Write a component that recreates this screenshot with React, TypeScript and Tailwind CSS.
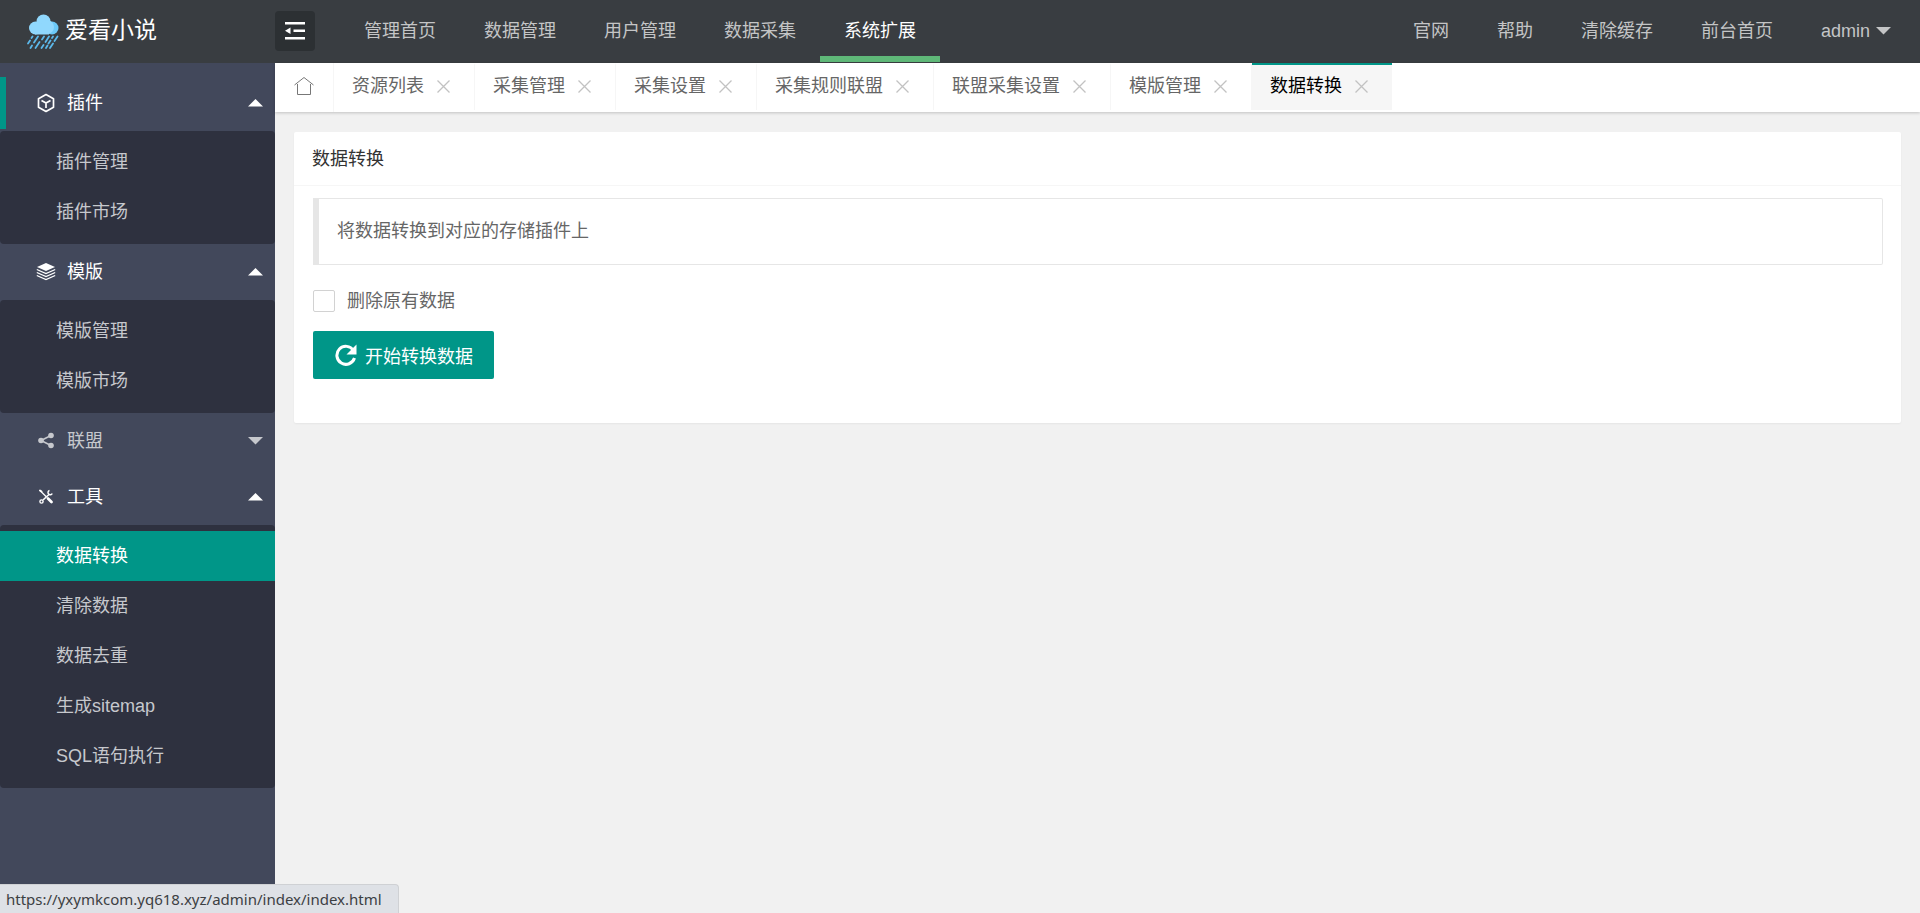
import React, { useState } from "react";

const topLinks = ["管理首页", "数据管理", "用户管理", "数据采集", "系统扩展"];
const rightLinks = ["官网", "帮助", "清除缓存", "前台首页"];
const tabs = ["资源列表", "采集管理", "采集设置", "采集规则联盟", "联盟采集设置", "模版管理", "数据转换"];

const menu = [
  { title: "插件", icon: "cube", items: ["插件管理", "插件市场"] },
  { title: "模版", icon: "layers", items: ["模版管理", "模版市场"] },
  { title: "联盟", icon: "share", items: [] },
  {
    title: "工具",
    icon: "tools",
    items: ["数据转换", "清除数据", "数据去重", "生成sitemap", "SQL语句执行"],
  },
];

function LogoIcon() {
  return (
    <svg width="32" height="36" viewBox="0 0 32 36" aria-hidden="true">
      <circle cx="25" cy="14" r="6.5" fill="#6cc9f7" />
      <circle cx="16.5" cy="7.5" r="7" fill="#90d8fd" />
      <circle cx="8.5" cy="14" r="6.5" fill="#90d8fd" />
      <circle cx="20" cy="13" r="7" fill="#90d8fd" />
      <rect x="8" y="12" width="14" height="8.5" fill="#90d8fd" />
      <g stroke="#5cb9ea" strokeWidth="1.8" strokeLinecap="round">
        <path d="M5.500 22.500l-1 1.500M3 26.500l-2 3M11 22.500l-4 6M5 31.500L3.500 34M17 22.500l-2 3M12.500 28l-4 6M22 22.500l-3.500 5.500M16.500 31l-2 3M26 22.500l-1 1.500M23.500 26.500l-2 3M30.500 22.500l-3 4.500M20.500 31.500L19 34M26 29.500l-3 4.500" />
      </g>
    </svg>
  );
}

function MenuIcon({ name }: { name: string }) {
  if (name === "cube") {
    return (
      <svg width="20" height="20" viewBox="0 0 20 20" fill="none" stroke="currentColor" strokeWidth="1.7" strokeLinejoin="round" aria-hidden="true">
        <path d="M10 1.500l7.500 4.200v8.600L10 18.500l-7.500-4.200V5.700z" />
        <path d="M5.500 7.500l4.500 2.600 4.500-2.600M10 10v5" />
      </svg>
    );
  }
  if (name === "layers") {
    return (
      <svg width="20" height="20" viewBox="0 0 20 20" fill="none" stroke="currentColor" strokeWidth="1.3" aria-hidden="true">
        <path d="M10 1l9 4-9 4-9-4z" fill="currentColor" stroke="none" />
        <path d="M.8 7.500L10 11.500l9.200-4M.8 10.500L10 14.500l9.200-4M.8 13.500L10 17.500l9.200-4" />
      </svg>
    );
  }
  if (name === "share") {
    return (
      <svg width="20" height="20" viewBox="0 0 20 20" fill="currentColor" aria-hidden="true">
        <path d="M15 4.500L5 9.500l10 5" fill="none" stroke="currentColor" strokeWidth="1.6" />
        <circle cx="15" cy="4.5" r="2.8" />
        <circle cx="5" cy="9.5" r="2.8" />
        <circle cx="15" cy="14.5" r="2.8" />
      </svg>
    );
  }
  return (
    <svg width="20" height="20" viewBox="0 0 20 20" fill="none" stroke="currentColor" aria-hidden="true">
      <path d="M4.500 4l5.500 5.500" strokeWidth="1.3" strokeLinecap="round" />
      <path d="M4 3.500l1.500 1" strokeWidth="2" strokeLinecap="round" />
      <path d="M12 11.500l3.500 3.500" strokeWidth="2.8" strokeLinecap="round" />
      <path d="M13 7.500L7 13" strokeWidth="1.6" />
      <circle cx="5.5" cy="14.5" r="1.6" strokeWidth="1.4" />
      <path d="M13.500 3.500a2.200 2.200 0 1 0 2.700 3" strokeWidth="1.5" />
    </svg>
  );
}

function Arrow({ up }: { up?: boolean }) {
  return (
    <svg width="15" height="8" viewBox="0 0 15 8" fill="currentColor" aria-hidden="true">
      {up ? <path d="M0 7.500L7.500 0 15 7.500z" /> : <path d="M0 0h15L7.500 7.500z" />}
    </svg>
  );
}

export default function App() {
  const [open, setOpen] = useState(["插件", "模版", "工具"]);
  const [tab, setTab] = useState("数据转换");

  const toggle = (title: string) => {
    setOpen(open.includes(title) ? open.filter((t) => t !== title) : [...open, title]);
  };

  const headClass = (title: string) => {
    if (title === "插件") {
      return "my-[2px] flex h-[52px] w-full items-center border-l-[6px] border-[#009688] pr-3 pl-[30px] text-white";
    }
    return open.includes(title)
      ? "flex h-14 w-full items-center pr-3 pl-9 text-white"
      : "flex h-14 w-full items-center pr-3 pl-9";
  };

  return (
    <div className="flex min-h-screen flex-col bg-[#f1f1f1] font-['Liberation_Sans','Noto_Sans_CJK_SC',sans-serif] text-lg text-[#666]">
      <header className="flex h-[63px] bg-[#393d41] text-[#c4c5c6]">
        <div className="flex w-[275px] items-center gap-[6px] pl-[27px] text-white">
          <LogoIcon />
          <h1 className="pb-[2px] text-[23px]">爱看小说</h1>
        </div>
        <button aria-label="收起菜单" className="mt-[11px] flex size-10 items-center justify-center rounded bg-[#2c3033] text-white">
          <svg width="20" height="18" viewBox="0 0 20 18" fill="currentColor" aria-hidden="true">
            <path d="M0 0h20v2.500H0zM8.500 7.500H20V10H8.500zM0 15h20v2.500H0zM0 8.700L5.500 5.500v6.500z" />
          </svg>
        </button>
        <nav className="ml-[25px] flex">
          {topLinks.map((link) => (
            <a
              key={link}
              href="#"
              className={
                link === "系统扩展"
                  ? "mb-px flex w-[120px] items-center justify-center border-b-[6px] border-[#5fb878] pt-[6px] text-white"
                  : "mb-px flex w-[120px] items-center justify-center border-b-[6px] border-transparent pt-[6px]"
              }
            >
              {link}
            </a>
          ))}
        </nav>
        <nav className="ml-auto flex items-center gap-12 pr-[29px] pb-[2px]">
          {rightLinks.map((link) => (
            <a key={link} href="#">
              {link}
            </a>
          ))}
          <button className="flex items-center gap-[6px]">
            admin
            <Arrow />
          </button>
        </nav>
      </header>

      <div className="flex flex-1">
        <aside className="w-[275px] shrink-0 bg-[#42485b] pt-3 text-[#c6c8cd]">
          {menu.map((group) => {
            const isOpen = open.includes(group.title);
            return (
              <div key={group.title} className="flow-root">
                <button onClick={() => toggle(group.title)} className={headClass(group.title)}>
                  <MenuIcon name={group.icon} />
                  <span className="ml-[11px] flex-1 text-left">{group.title}</span>
                  <Arrow up={isOpen} />
                </button>
                {isOpen && (
                  <ul className="rounded-sm bg-[#2e313f] pt-[6px] pb-[7px]">
                    {group.items.map((item) => (
                      <li key={item}>
                        <a
                          href="#"
                          className={
                            item === "数据转换"
                              ? "flex h-[50px] items-center bg-[#009688] pl-14 text-white"
                              : "flex h-[50px] items-center pl-14"
                          }
                        >
                          {item}
                        </a>
                      </li>
                    ))}
                  </ul>
                )}
              </div>
            );
          })}
        </aside>

        <main className="min-w-0 flex-1">
          <div className="flex h-[49px] bg-white shadow-[0_1px_3px_rgba(0,0,0,0.2)]">
            <a href="#" aria-label="首页" className="flex w-[59px] items-center justify-center border-r border-[#f6f6f6] pb-[3px] text-[#777]">
              <svg width="20" height="20" viewBox="0 0 20 20" fill="none" stroke="currentColor" aria-hidden="true">
                <path d="M.5 9L10 1.500 19.500 9M3.500 8v10.500h13V8" />
              </svg>
            </a>
            {tabs.map((name) => (
              <div
                key={name}
                className={
                  name === tab
                    ? "mb-[2px] flex items-center gap-[13px] border-t-2 border-[#009688] bg-[#f6f6f6] px-[18px] pb-[3px] text-black"
                    : "mb-[2px] flex items-center gap-[13px] border-t-2 border-r border-t-transparent border-r-[#f6f6f6] px-[18px] pb-[3px]"
                }
              >
                <button onClick={() => setTab(name)}>{name}</button>
                <button aria-label={"关闭" + name} className="pr-[6px] text-[#c2c2c2]">
                  <svg width="13" height="13" viewBox="0 0 13 13" stroke="currentColor" strokeWidth="1.3" aria-hidden="true">
                    <path d="M.5.5l12 12M12.500.5l-12 12" />
                  </svg>
                </button>
              </div>
            ))}
          </div>

          <section className="mx-[19px] mt-5 rounded-xs bg-white shadow-[0_1px_2px_rgba(0,0,0,0.05)]">
            <h2 className="border-b border-[#f6f6f6] px-[18px] pt-[13px] pb-3 text-[#333]">数据转换</h2>
            <form className="pt-3 pr-[18px] pb-11 pl-[19px]" onSubmit={(e) => e.preventDefault()}>
              <blockquote className="rounded-r-xs border border-l-[6px] border-[#e6e6e6] px-[18px] pt-[18px] pb-[19px]">
                将数据转换到对应的存储插件上
              </blockquote>
              <label className="mt-[22px] flex w-fit items-center gap-3">
                <input type="checkbox" className="size-[22px] appearance-none rounded-xs border border-[#d2d2d2] checked:bg-[#5fb878]" />
                删除原有数据
              </label>
              <button className="mt-4 flex h-12 items-center gap-2 rounded-xs bg-[#009688] pr-[21px] pl-[22px] text-white">
                <svg width="22" height="22" viewBox="0 0 22 22" aria-hidden="true">
                  <path d="M18.500 6.500A9 9 0 1 0 19.500 14" fill="none" stroke="currentColor" strokeWidth="3" />
                  <path d="M21.500.5v10h-10z" fill="currentColor" />
                </svg>
                <span className="pt-[3px]">开始转换数据</span>
              </button>
            </form>
          </section>
        </main>
      </div>

      {/* link preview */}
      <div className="fixed bottom-0 left-0 rounded-tr border-t border-r border-[#cfd1d4] bg-[#dee1e6] py-[3px] pr-4 pl-[6px] font-['Noto_Sans',sans-serif] text-[15px] leading-[22px] text-[#3c4043]">
        https://yxymkcom.yq618.xyz/admin/index/index.html
      </div>
    </div>
  );
}
